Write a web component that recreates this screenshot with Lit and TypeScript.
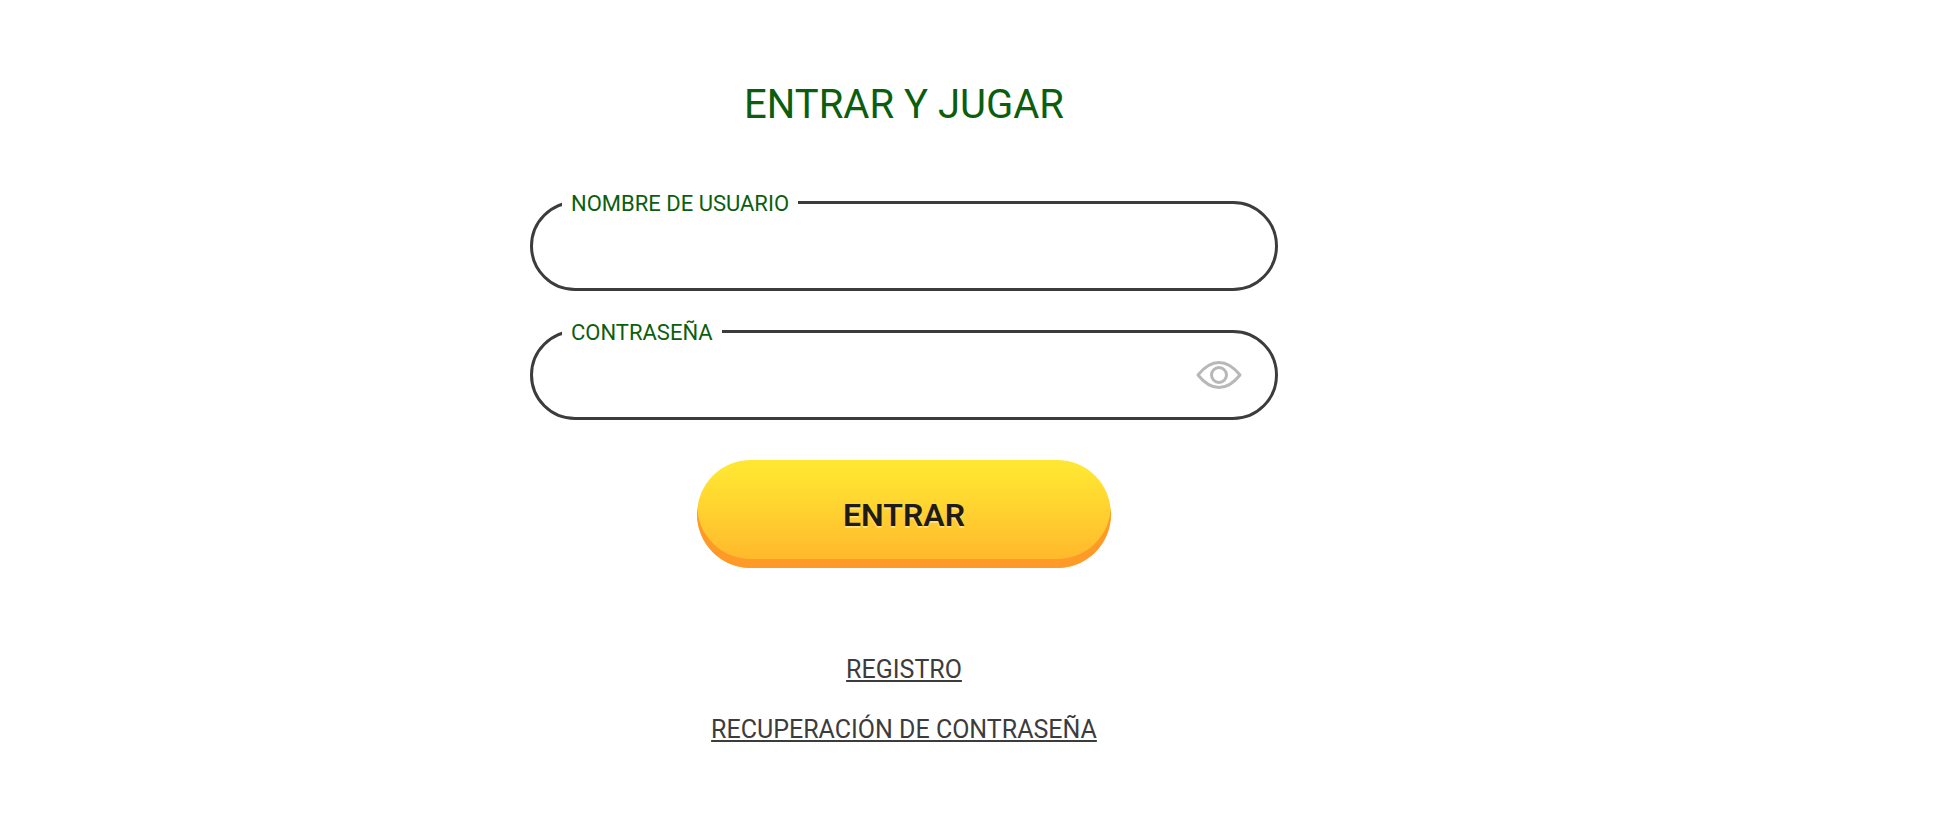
import { LitElement, html, css } from "lit";
import { customElement, state } from "lit/decorators.js";

@customElement("app-root")
export class AppRoot extends LitElement {
  @state() private revealed = false;

  static styles = css`
    :host {
      display: block;
      font-family: Roboto, sans-serif;
      color: #3c3c3c;
      background: #fff;
    }
    * {
      box-sizing: border-box;
    }
    .page {
      display: flex;
      flex-direction: column;
      align-items: center;
      padding: 81px 136px 80px 0;
    }
    .title {
      margin: 0 0 72px;
      font-size: 40px;
      line-height: 48px;
      font-weight: 400;
      color: #0b5e0e;
    }
    .form {
      display: flex;
      flex-direction: column;
      align-items: center;
      gap: 40px;
      width: 100%;
      max-width: 748px;
    }
    .fields {
      display: flex;
      flex-direction: column;
      gap: 39px;
      width: 100%;
    }
    .field {
      position: relative;
      display: flex;
      align-items: center;
      width: 100%;
      height: 90px;
      padding: 0 33px 0 39px;
      border: 3px solid #3c3c3c;
      border-radius: 45px;
    }
    .label {
      position: absolute;
      top: -14px;
      left: 29px;
      padding: 0 9px;
      font-size: 22px;
      line-height: 28px;
      color: #0b5e0e;
      background: #fff;
    }
    .input {
      flex: 1;
      min-width: 0;
      height: 48px;
      padding: 0;
      border: 0;
      outline: 0;
      background: none;
      font: inherit;
      font-size: 26px;
      color: inherit;
    }
    .eye {
      display: flex;
      padding: 0;
      border: 0;
      background: none;
      cursor: pointer;
    }
    .submit {
      width: 414px;
      max-width: 100%;
      height: 108px;
      padding: 2px 0 0;
      border: 0;
      border-radius: 54px;
      background: linear-gradient(#ffe632 9px, #ffb52c);
      box-shadow: inset 0 -9px #ff9a28;
      font-family: inherit;
      font-size: 32px;
      line-height: 40px;
      font-weight: 600;
      color: #1e1c14;
      text-shadow: 0 2px rgba(255, 255, 255, 0.4);
      cursor: pointer;
    }
    .links {
      display: flex;
      flex-direction: column;
      align-items: center;
      gap: 28px;
      margin-top: 86px;
    }
    .link {
      font-size: 25px;
      line-height: 32px;
      color: #3c3c3c;
      text-decoration: underline;
      text-decoration-thickness: 2px;
      text-underline-offset: 2px;
    }
  `;

  private toggle() {
    this.revealed = !this.revealed;
  }

  render() {
    return html`
      <main class="page">
        <h1 class="title">ENTRAR Y JUGAR</h1>
        <form class="form" @submit=${(e: Event) => e.preventDefault()}>
          <div class="fields">
            <div class="field">
              <label class="label" for="user">NOMBRE DE USUARIO</label>
              <input class="input" id="user" type="text" autocomplete="username" />
            </div>
            <div class="field">
              <label class="label" for="pass">CONTRASEÑA</label>
              <input
                class="input"
                id="pass"
                type=${this.revealed ? "text" : "password"}
                autocomplete="current-password"
              />
              <button class="eye" type="button" aria-label="Mostrar contraseña" @click=${this.toggle}>
                <svg width="46" height="30" viewBox="0 0 46 30" fill="none" stroke="#b8b8b8" stroke-width="3" stroke-linejoin="round">
                  <path d="M2 15C8 7.500 15 2.500 23 2.500S38 7.500 44 15C38 22.500 31 27.500 23 27.500S8 22.500 2 15Z" />
                  <circle cx="23" cy="15" r="7.500" />
                </svg>
              </button>
            </div>
          </div>
          <button class="submit" type="submit">ENTRAR</button>
        </form>
        <nav class="links">
          <a class="link" href="#registro">REGISTRO</a>
          <a class="link" href="#recuperacion">RECUPERACIÓN DE CONTRASEÑA</a>
        </nav>
      </main>
    `;
  }
}
